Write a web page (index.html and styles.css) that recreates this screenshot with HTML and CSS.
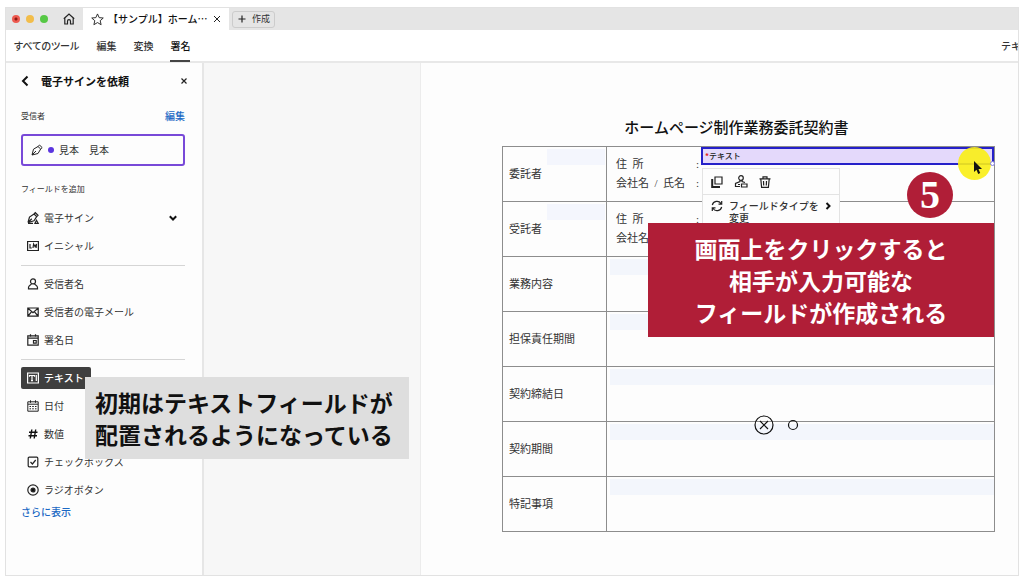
FILE: index.html
```html
<!DOCTYPE html>
<html lang="ja">
<head>
<meta charset="utf-8">
<meta name="viewport" content="width=device-width, initial-scale=1">
<title>電子サインを依頼</title>
<link rel="stylesheet" href="styles.css">
</head>
<body>
<div class="window">
  <header class="tabbar">
    <div class="lights"><span class="light red"></span><span class="light yellow"></span><span class="light green"></span></div>
    <button class="plain home" aria-label="ホーム"><svg class="ico" width="12" height="12" viewBox="0 0 12 12"><path d="M.8 5.800 6 1l5.200 4.800M1.800 5v6h2.700V8.200a1.500 1.500 0 0 1 3 0V11h2.700V5"/></svg></button>
    <div class="tab">
      <svg width="13" height="13" viewBox="0 0 14 14"><path d="m7 1 1.800 4 4.400.4L9.900 8.300l1 4.300L7 10.300l-3.900 2.300 1-4.300L.8 5.400 5.200 5z"/></svg>
      <span class="tab-title">【サンプル】ホーム…</span>
      <button class="plain" aria-label="タブを閉じる"><svg width="8" height="8" viewBox="0 0 8 8"><path d="m1 1 6 6m0-6L1 7"/></svg></button>
    </div>
    <button class="create"><svg class="ico" width="8" height="8" viewBox="0 0 8 8"><path d="M4 .5v7M.5 4h7"/></svg>作成</button>
  </header>
  <nav class="toolbar">
    <a href="#">すべてのツール</a><a href="#">編集</a><a href="#">変換</a><a href="#" class="current">署名</a>
    <span class="toolbar-end">テキ</span>
  </nav>
  <div class="workspace">
    <aside class="sidebar">
      <div class="side-head">
        <button class="plain" aria-label="戻る"><svg class="bold" width="8" height="12" viewBox="0 0 8 12"><path d="M6.500 1.500 2 6l4.500 4.500"/></svg></button>
        <h1>電子サインを依頼</h1>
        <button class="plain" aria-label="閉じる"><svg class="ico" width="6" height="6" viewBox="0 0 6 6"><path d="m.5.5 5 5m0-5-5 5"/></svg></button>
      </div>
      <div class="recipient-head"><span>受信者</span><a href="#">編集</a></div>
      <button class="recipient"><svg width="12" height="12" viewBox="0 0 12 12"><path d="M1 11 2.500 5.200 7 2.500 9.700 5 7 9.500 1 11zM1 11l4-4M7 2.500 8.500 1 11.200 3.600 9.700 5"/></svg><span class="dot"></span>見本　見本</button>
      <h2>フィールドを追加</h2>
      <div class="fields">
        <button class="field-item"><svg class="ico" width="12" height="12" viewBox="0 0 12 12"><path d="M1 10.500 2.500 5 7 2l2.700 2.600L7 8.800l-6 1.700 3.800-3.700M7 2l1.300-1.300L11 3.300 9.700 4.600M1 11.300h5M8 11.300l1.500-3 1.700 3z"/></svg>電子サイン<svg class="bold chev" width="8" height="6" viewBox="0 0 8 6"><path d="M.8 1.300 4 4.500l3.200-3.200"/></svg></button>
        <button class="field-item"><svg class="ico" width="12" height="12" viewBox="0 0 12 12"><path d="M.6 1.500h10.800v9H.6zM3 4v4h1.800M6 8l.6-4L8 6.500 9.500 4l-.4 4"/></svg>イニシャル</button>
        <hr>
        <button class="field-item"><svg class="ico" width="12" height="12" viewBox="0 0 12 12"><circle cx="6" cy="3.400" r="2.500"/><path d="M4.500 5.500C4.500 7 1.500 7 1.500 9.500v1.300h9V9.500c0-2.500-3-2.500-3-4"/></svg>受信者名</button>
        <button class="field-item"><svg class="ico" width="12" height="12" viewBox="0 0 12 12"><path d="M.8 2h10.400v8.200H.8zM1 2.200l5 4.500 5-4.500M1 10l3.700-4.300M11 10 7.300 5.700"/></svg>受信者の電子メール</button>
        <button class="field-item"><svg class="ico" width="12" height="12" viewBox="0 0 12 12"><path d="M.8 1.800h10.400v9.400H.8zM1 4.200h10M3.500.3v2.500M8.500.3v2.500M6.500 6.500h2.700v2.700H6.500z"/></svg>署名日</button>
        <hr>
        <button class="field-item selected"><svg class="ico" width="12" height="12" viewBox="0 0 12 12"><path d="M.6 1h10.800v10H.6zM2.500 4.800V3.500h5v1.300M5 3.500v5M4 8.700h2M9.300 3v6"/></svg>テキスト</button>
        <button class="field-item"><svg width="12" height="12" viewBox="0 0 12 12"><path d="M.8 1.800h10.400v9.400H.8zM1 4.200h10M3.500.3v2.500M8.500.3v2.500M2.500 6.500h1.500M5.200 6.500h1.600M8 6.500h1.500M2.500 8.800h1.500M5.200 8.800h1.600M8 8.800h1.500"/></svg>日付</button>
        <button class="field-item"><svg class="hash" width="12" height="12" viewBox="0 0 12 12"><path d="M4.800 1.500 3.300 10.500M8.700 1.500 7.200 10.500M2 4.300h8.500M1.500 7.700H10"/></svg>数値</button>
        <button class="field-item"><svg class="ico" width="12" height="12" viewBox="0 0 12 12"><rect x="1.200" y="1.200" width="9.600" height="9.600" rx="1"/><path d="m3.500 6 1.900 2 3.300-4"/></svg>チェックボックス</button>
        <button class="field-item"><svg class="ico" width="12" height="12" viewBox="0 0 12 12"><circle cx="6" cy="6" r="5.200"/><circle class="solid" cx="6" cy="6" r="2"/></svg>ラジオボタン</button>
      </div>
      <a class="more" href="#">さらに表示</a>
    </aside>
    <div class="canvas"></div>
    <main class="page">
      <h2 class="doc-title">ホームページ制作業務委託契約書</h2>
      <div class="contract-wrap">
        <table class="contract">
          <tr><th scope="row"><i class="name-blank"></i>委託者</th><td><p><span>住&ensp;所</span>:</p><p><span>会社名&ensp;/&ensp;氏名</span>:</p></td></tr>
          <tr><th scope="row"><i class="name-blank"></i>受託者</th><td><p><span>住&ensp;所</span>:</p><p><span>会社名&ensp;/&ensp;氏名</span>:</p></td></tr>
          <tr><th scope="row">業務内容</th><td class="blank"></td></tr>
          <tr><th scope="row">担保責任期間</th><td class="blank"></td></tr>
          <tr><th scope="row">契約締結日</th><td class="blank"></td></tr>
          <tr><th scope="row">契約期間</th><td class="blank"></td></tr>
          <tr><th scope="row">特記事項</th><td class="blank"></td></tr>
        </table>
        <div class="text-field"><b>*</b>テキスト</div>
        <div class="popup">
          <div class="popup-tools">
            <button class="plain" aria-label="複製"><svg class="ico" width="12" height="12" viewBox="0 0 12 12"><path d="M4 1h7v7H4z"/><path class="thick" d="M1.200 3v8H9"/></svg></button>
            <button class="plain" aria-label="受信者"><svg class="ico" width="14" height="13" viewBox="0 0 14 13"><circle cx="7" cy="3" r="2.300"/><path d="M6 5v1.500L1.500 8.500v3H6M8 5v1.500l3 1M7.500 9h5.500v3H7.500zM4 9.500h2"/></svg></button>
            <button class="plain" aria-label="削除"><svg class="ico" width="12" height="12" viewBox="0 0 12 12"><path d="M.5 2.800h11M4 2.500V.8h4v1.700M1.800 3l.8 8.300h6.800l.8-8.300M4.500 5l.2 4.500M7.500 5l-.2 4.500"/></svg></button>
          </div>
          <button class="popup-row"><svg class="ico" width="12" height="12" viewBox="0 0 12 12"><path d="M1.300 5A4.800 4.800 0 0 1 10 3.500M10.700 7A4.800 4.800 0 0 1 2 8.500M10.700 1v3.200H7.500M1.300 11V7.800h3.200"/></svg><span>フィールドタイプを変更</span><svg class="bold" width="6" height="8" viewBox="0 0 6 8"><path d="m1.500 1 3 3-3 3"/></svg></button>
        </div>
        <span class="highlight"></span><span class="handle"></span>
        <svg class="cursor" width="9" height="14" viewBox="0 0 9 14"><path d="M1 0v11l2.500-2.200L5.200 13l2-1-1.700-4H9z"/></svg>
        <div class="banner">画面上をクリックすると<br>相手が入力可能な<br>フィールドが作成される</div>
        <span class="step">5</span>
        <svg class="marks" width="46" height="22" viewBox="0 0 46 22"><circle cx="11" cy="11" r="9"/><path d="m7 7 8 8m0-8-8 8"/><circle cx="40" cy="11" r="4.500"/></svg>
      </div>
    </main>
  </div>
  <div class="note">初期はテキストフィールドが<br>配置されるようになっている</div>
</div>
</body>
</html>
```
FILE: styles.css
```css
* { box-sizing: border-box; }
body {
  margin: 0;
  padding: 7px 5px 6px;
  min-height: 100vh;
  display: flex;
  background: #fff;
  color: #333;
  font: 10px/14px "Noto Sans CJK JP", sans-serif;
}
a { color: inherit; text-decoration: none; }
h1, h2, p { margin: 0; font-weight: 400; }
button { font: inherit; color: inherit; padding: 0; border: 0; background: none; }
svg { fill: none; stroke: #222; stroke-width: 1; flex: none; overflow: visible; }
.plain { display: flex; }
.ico { stroke-width: 1.2; }
.hash { stroke: #111; stroke-width: 1.4; }
.bold { stroke: #111; stroke-width: 2; }
.thick { stroke-width: 2; }
.solid { fill: #111; }

.window {
  position: relative;
  flex: 1;
  min-width: 0;
  display: flex;
  flex-direction: column;
  border: 1px solid #e2e2e2;
}
.tabbar { display: flex; height: 22px; background: #e5e5e5; align-items: center; }
.lights { display: flex; gap: 6px; margin-left: 6px; }
.light { width: 8px; height: 8px; border-radius: 50%; }
.red { background: radial-gradient(circle, #8e1712 1px, #ed5a50 2px); }
.yellow { background: #f2bd4a; }
.green { background: #56c845; }
.home { margin: 0 8px 0 15px; }
.tab { display: flex; align-items: center; height: 100%; padding: 0 8px; background: #fff; gap: 4px; color: #111; }
.tab-title { width: 98px; white-space: nowrap; font-weight: 500; }
.tab .plain { margin-left: 3px; }
.create {
  display: flex;
  align-items: center;
  gap: 6px;
  height: 17px;
  margin-left: 3px;
  padding: 0 4px 0 5px;
  border: 1px solid #ccc;
  border-radius: 3px;
  font-size: 9px;
}

.toolbar {
  display: flex;
  gap: 17px;
  height: 33px;
  padding-left: 8px;
  border-bottom: 2px solid #e8e8e8;
  line-height: 31px;
  font-weight: 500;
  font-feature-settings: "palt";
}
.current { border-bottom: 2px solid #444; color: #111; height: 32px; }
.toolbar-end { margin-left: auto; width: 17px; overflow: hidden; white-space: nowrap; font-feature-settings: normal; }

.workspace { flex: 1; display: flex; }
.sidebar { flex: none; width: 198px; padding: 8px 17px 8px 15px; border-right: 2px solid #e6e6e6; background: #fdfdfd; }
.side-head { display: flex; align-items: center; height: 20px; }
.side-head h1 { flex: 1; margin-left: 12px; font-size: 11px; font-weight: 700; color: #111; }
.side-head .plain:last-child { margin-right: -2px; }
.recipient-head { display: flex; justify-content: space-between; margin-top: 18px; font-size: 8px; }
.recipient-head a { font-size: 10px; }
.recipient-head a, .more { color: #1b69c4; font-weight: 500; }
.recipient {
  display: flex;
  align-items: center;
  gap: 5px;
  width: 100%;
  height: 32px;
  margin-top: 11px;
  padding: 0 8px;
  border: 2px solid #7849d8;
  border-radius: 3px;
}
.dot { width: 6px; height: 6px; border-radius: 50%; background: #5b35df; }
.sidebar h2 { margin: 16px 0 11px; font-size: 8px; }
.fields { display: flex; flex-direction: column; gap: 6px; }
.field-item { display: flex; align-items: center; gap: 5px; height: 22px; padding: 0 6px; text-align: left; }
.field-item.selected { align-self: flex-start; background: #3f3f3f; color: #fff; border-radius: 2px; font-weight: 500; padding-right: 7px; }
.selected svg { stroke: #fff; }
.chev { margin: 0 2px 0 auto; }
.fields hr { width: 100%; height: 1px; margin: 2px 0 1px; border: 0; background: #d5d5d5; }
.more { display: block; margin-top: 4px; }

.canvas { flex: 0 1 217px; background: #f7f7f7; border-right: 1px solid #ececec; }
.page {
  flex: 1;
  min-width: 580px;
  padding: 54px 23px 40px 81px;
  background: #fdfdfd;
  font-family: "Liberation Serif", "Noto Sans CJK JP", serif;
}
.doc-title { padding-right: 24px; font-size: 15px; line-height: 22px; text-align: center; color: #111; font-weight: 500; }
.contract-wrap { position: relative; margin-top: 7px; }
.contract { width: 100%; border-collapse: collapse; table-layout: fixed; font-size: 11px; line-height: 19px; }
.contract th, .contract td { height: 55px; border: 1px solid #8d8d8d; padding: 0 6px; text-align: left; font-weight: 400; }
.contract th { position: relative; width: 104px; }
.contract td { padding: 0 9px; }
.contract td p { display: flex; }
.contract td p span { width: 80px; white-space: nowrap; }
.name-blank { position: absolute; top: 2px; right: 1px; width: 58px; height: 16px; background: #f4f6fd; }
.contract .blank { background: linear-gradient(#f3f6fc, #f3f6fc) 3px 2px / 100% 16px no-repeat; }

.text-field {
  position: absolute;
  top: 1px; left: 199px; right: 1px;
  height: 18px;
  padding-left: 2px;
  border: 2px solid #2520c9;
  background: #e4d9fb;
  color: #222;
  font: 500 8px/14px "Noto Sans CJK JP", sans-serif;
}
.text-field b { color: #e02020; }
.popup {
  position: absolute;
  top: 22px; left: 200px;
  width: 138px;
  border: 1px solid #e3e3e3;
  background: #fdfdfd;
  font-family: "Noto Sans CJK JP", sans-serif;
}
.popup-tools { display: flex; gap: 11px; align-items: center; height: 26px; padding: 0 8px; border-bottom: 1px solid #e3e3e3; }
.popup-row { display: flex; width: 100%; padding: 5px 8px; gap: 6px; text-align: left; line-height: 12px; font-weight: 500; align-items: flex-start; }
.popup-row span { flex: 1 0 90px; width: 90px; }
.popup-row .bold { margin-top: 2px; }
.highlight { position: absolute; top: 1px; right: 4px; width: 33px; height: 33px; border-radius: 50%; background: rgba(250, 238, 20, .9); }
.handle { position: absolute; top: 15px; right: 0; width: 5px; height: 5px; border: 1px solid #8480e0; border-radius: 50%; background: #fff; }
.cursor { position: absolute; top: 15px; right: 13px; fill: #111; stroke: none; }
.banner {
  position: absolute;
  top: 77px; left: 146px; right: 1px;
  padding: 9px 0;
  background: #b01e37;
  color: #fff;
  text-align: center;
  font: 700 23px/32px "Noto Sans CJK JP", sans-serif;
}
.step {
  position: absolute;
  top: 26px; right: 42px;
  width: 46px; height: 46px;
  border-radius: 50%;
  background: #b01e37;
  color: #fff;
  text-align: center;
  font: 700 40px/46px "Liberation Serif", serif;
}
.marks { position: absolute; top: 268px; left: 251px; stroke: #111; stroke-width: 1.2; }
.note {
  position: absolute;
  top: 369px; left: 79px;
  width: 324px;
  padding: 9px 10px;
  background: #dedede;
  color: #111;
  white-space: nowrap;
  font: 700 23px/32px "Noto Sans CJK JP", sans-serif;
}
```
